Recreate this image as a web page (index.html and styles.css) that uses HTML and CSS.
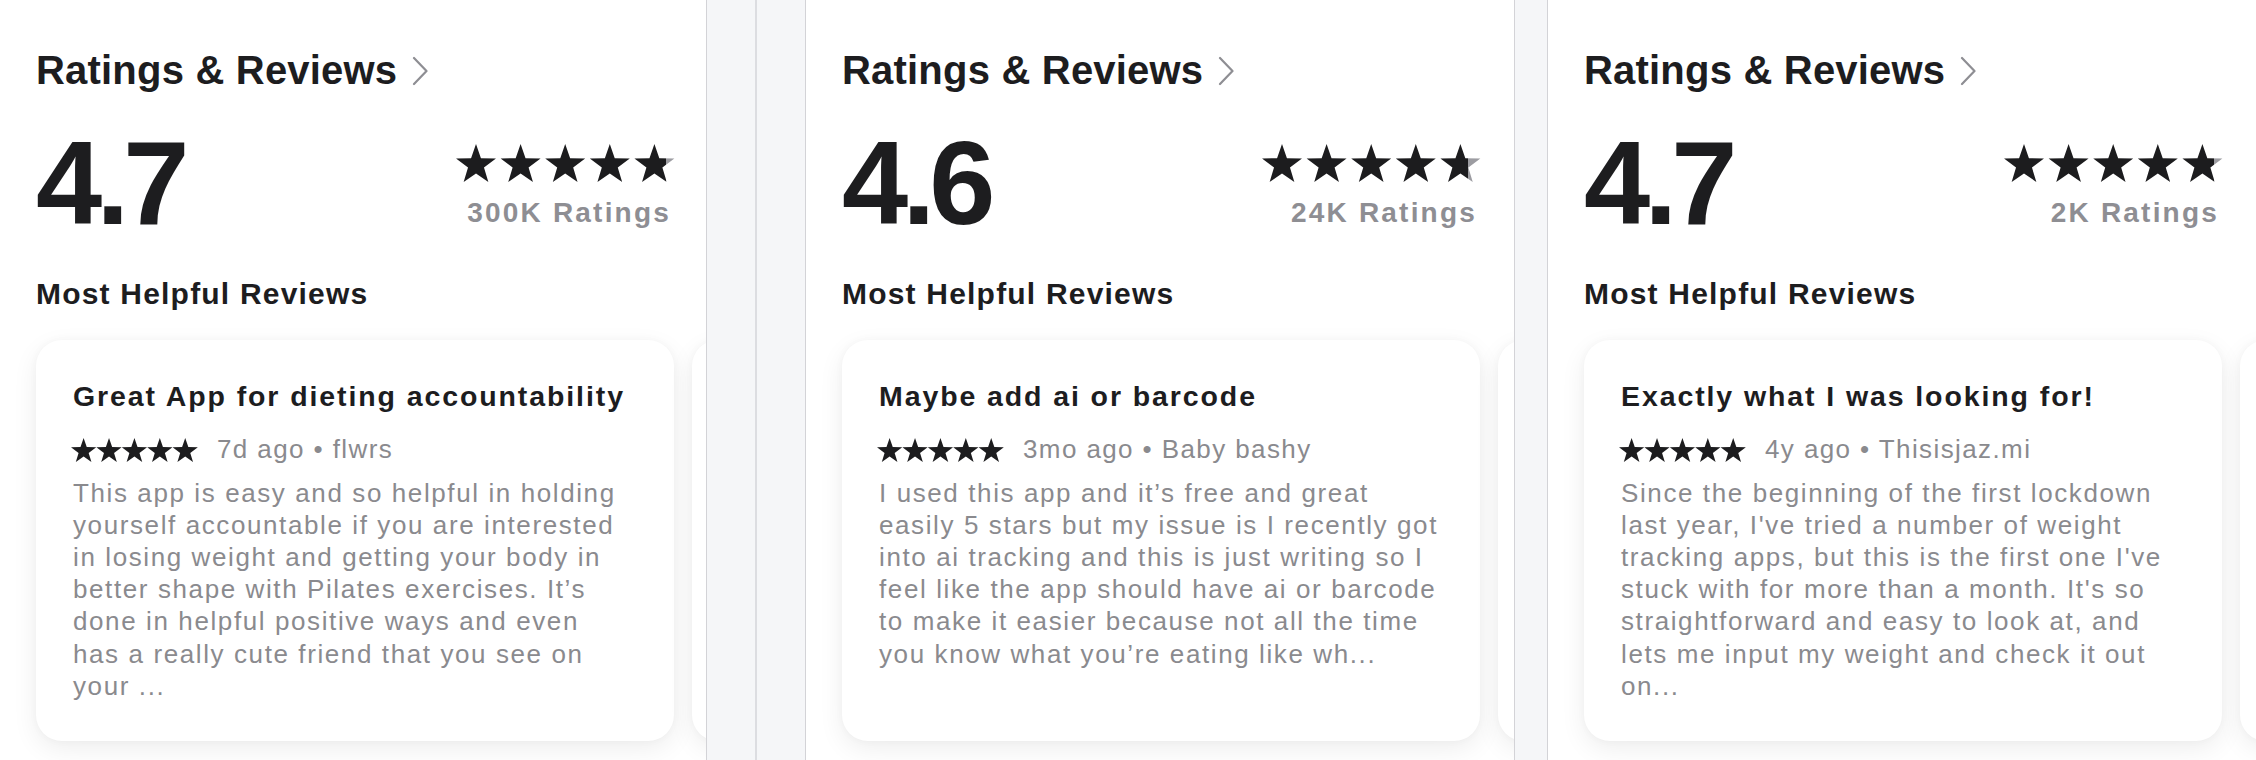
FILE: index.html
```html
<!DOCTYPE html>
<html lang="en">
<head>
<meta charset="utf-8">
<title>Ratings &amp; Reviews</title>
<link rel="stylesheet" href="styles.css">
</head>
<body>
<svg width="0" height="0" class="defs" aria-hidden="true">
  <defs>
    <path id="star" d="M0,-1 L0.235,-0.324 L0.951,-0.309 L0.380,0.124 L0.588,0.809 L0,0.4 L-0.588,0.809 L-0.380,0.124 L-0.951,-0.309 L-0.235,-0.324 Z"/>
    <linearGradient id="fill47" x1="0" x2="1" y1="0" y2="0">
      <stop offset="0.8" stop-color="#1c1c1e"/>
      <stop offset="0.8" stop-color="#9c9ca1"/>
    </linearGradient>
    <linearGradient id="fill46" x1="0" x2="1" y1="0" y2="0">
      <stop offset="0.69" stop-color="#1c1c1e"/>
      <stop offset="0.69" stop-color="#9c9ca1"/>
    </linearGradient>
  </defs>
</svg>
<div class="page">

  <section class="panel panel-first">
    <div class="rr-head">
      <h2 class="rr-title">Ratings &amp; Reviews</h2>
      <svg class="chev" viewBox="0 0 16 30"><path d="M2 2 L14.5 15 L2 28"/></svg>
    </div>
    <div class="rating-row">
      <div class="score">4.7</div>
      <div class="rating-side">
        <svg class="big-stars" viewBox="0 0 219 38">
          <use href="#star" transform="translate(20 21) scale(21)"/>
          <use href="#star" transform="translate(64.6 21) scale(21)"/>
          <use href="#star" transform="translate(109.2 21) scale(21)"/>
          <use href="#star" transform="translate(153.8 21) scale(21)"/>
          <use href="#star" class="part47" transform="translate(198.4 21) scale(21)"/>
        </svg>
        <div class="count">300K Ratings</div>
      </div>
    </div>
    <h3 class="mhr">Most Helpful Reviews</h3>
    <div class="cards">
      <article class="card">
        <h4 class="card-title">Great App for dieting accountability</h4>
        <div class="meta">
          <svg class="small-stars" viewBox="0 0 127 24">
            <use href="#star" transform="translate(12.62 13.27) scale(13.27)"/>
            <use href="#star" transform="translate(38.02 13.27) scale(13.27)"/>
            <use href="#star" transform="translate(63.42 13.27) scale(13.27)"/>
            <use href="#star" transform="translate(88.82 13.27) scale(13.27)"/>
            <use href="#star" transform="translate(114.22 13.27) scale(13.27)"/>
          </svg>
          <span class="meta-text">7d ago • flwrs</span>
        </div>
        <p class="body">
          <span>This app is easy and so helpful in holding</span>
          <span>yourself accountable if you are interested</span>
          <span>in losing weight and getting your body in</span>
          <span>better shape with Pilates exercises. It’s</span>
          <span>done in helpful positive ways and even</span>
          <span>has a really cute friend that you see on</span>
          <span>your ...</span>
        </p>
      </article>
      <article class="card"></article>
    </div>
  </section>

  <div class="gutter gutter-wide"><div class="seam"></div></div>

  <section class="panel">
    <div class="rr-head">
      <h2 class="rr-title">Ratings &amp; Reviews</h2>
      <svg class="chev" viewBox="0 0 16 30"><path d="M2 2 L14.5 15 L2 28"/></svg>
    </div>
    <div class="rating-row">
      <div class="score">4.6</div>
      <div class="rating-side">
        <svg class="big-stars" viewBox="0 0 219 38">
          <use href="#star" transform="translate(20 21) scale(21)"/>
          <use href="#star" transform="translate(64.6 21) scale(21)"/>
          <use href="#star" transform="translate(109.2 21) scale(21)"/>
          <use href="#star" transform="translate(153.8 21) scale(21)"/>
          <use href="#star" class="part46" transform="translate(198.4 21) scale(21)"/>
        </svg>
        <div class="count">24K Ratings</div>
      </div>
    </div>
    <h3 class="mhr">Most Helpful Reviews</h3>
    <div class="cards">
      <article class="card">
        <h4 class="card-title">Maybe add ai or barcode</h4>
        <div class="meta">
          <svg class="small-stars" viewBox="0 0 127 24">
            <use href="#star" transform="translate(12.62 13.27) scale(13.27)"/>
            <use href="#star" transform="translate(38.02 13.27) scale(13.27)"/>
            <use href="#star" transform="translate(63.42 13.27) scale(13.27)"/>
            <use href="#star" transform="translate(88.82 13.27) scale(13.27)"/>
            <use href="#star" transform="translate(114.22 13.27) scale(13.27)"/>
          </svg>
          <span class="meta-text">3mo ago • Baby bashy</span>
        </div>
        <p class="body">
          <span>I used this app and it’s free and great</span>
          <span>easily 5 stars but my issue is I recently got</span>
          <span>into ai tracking and this is just writing so I</span>
          <span>feel like the app should have ai or barcode</span>
          <span>to make it easier because not all the time</span>
          <span>you know what you’re eating like wh...</span>
        </p>
      </article>
      <article class="card"></article>
    </div>
  </section>

  <div class="gutter gutter-narrow"></div>

  <section class="panel">
    <div class="rr-head">
      <h2 class="rr-title">Ratings &amp; Reviews</h2>
      <svg class="chev" viewBox="0 0 16 30"><path d="M2 2 L14.5 15 L2 28"/></svg>
    </div>
    <div class="rating-row">
      <div class="score">4.7</div>
      <div class="rating-side">
        <svg class="big-stars" viewBox="0 0 219 38">
          <use href="#star" transform="translate(20 21) scale(21)"/>
          <use href="#star" transform="translate(64.6 21) scale(21)"/>
          <use href="#star" transform="translate(109.2 21) scale(21)"/>
          <use href="#star" transform="translate(153.8 21) scale(21)"/>
          <use href="#star" class="part47" transform="translate(198.4 21) scale(21)"/>
        </svg>
        <div class="count">2K Ratings</div>
      </div>
    </div>
    <h3 class="mhr">Most Helpful Reviews</h3>
    <div class="cards">
      <article class="card">
        <h4 class="card-title">Exactly what I was looking for!</h4>
        <div class="meta">
          <svg class="small-stars" viewBox="0 0 127 24">
            <use href="#star" transform="translate(12.62 13.27) scale(13.27)"/>
            <use href="#star" transform="translate(38.02 13.27) scale(13.27)"/>
            <use href="#star" transform="translate(63.42 13.27) scale(13.27)"/>
            <use href="#star" transform="translate(88.82 13.27) scale(13.27)"/>
            <use href="#star" transform="translate(114.22 13.27) scale(13.27)"/>
          </svg>
          <span class="meta-text">4y ago • Thisisjaz.mi</span>
        </div>
        <p class="body">
          <span>Since the beginning of the first lockdown</span>
          <span>last year, I've tried a number of weight</span>
          <span>tracking apps, but this is the first one I've</span>
          <span>stuck with for more than a month. It's so</span>
          <span>straightforward and easy to look at, and</span>
          <span>lets me input my weight and check it out</span>
          <span>on...</span>
        </p>
      </article>
      <article class="card"></article>
    </div>
  </section>

</div>
</body>
</html>
```
FILE: styles.css
```css
* {
  box-sizing: border-box;
  margin: 0;
  padding: 0;
}

html,
body {
  width: 2256px;
  height: 760px;
  overflow: hidden;
  background: #ffffff;
}

body {
  font-family: "Liberation Sans", Arial, Helvetica, sans-serif;
  color: #1d1d1f;
}

.defs {
  position: absolute;
  width: 0;
  height: 0;
}

.page {
  display: flex;
  height: 760px;
}

.panel {
  flex: none;
  width: 708px;
  height: 760px;
  overflow: hidden;
  padding: 46px 0 0 36px;
  background: #ffffff;
}

.panel-first {
  width: 706px;
}

.gutter {
  flex: none;
  height: 760px;
  background: #f5f6f8;
  border-left: 1px solid #d3d3d7;
  border-right: 1px solid #d3d3d7;
}

.gutter-wide {
  width: 100px;
  display: flex;
  justify-content: center;
}

.seam {
  width: 2px;
  height: 100%;
  background: #dcdde1;
}

.gutter-narrow {
  width: 34px;
}

/* header */
.rr-head {
  display: flex;
  align-items: center;
  height: 48px;
}

.rr-title {
  font-size: 40px;
  font-weight: 700;
  line-height: 48px;
  letter-spacing: 0.2px;
  color: #1d1d1f;
}

.chev {
  width: 16px;
  height: 30px;
  margin-left: 15px;
  margin-top: 2px;
  fill: none;
  stroke: #8e8e93;
  stroke-width: 2.2;
  stroke-linecap: round;
  stroke-linejoin: round;
}

/* rating summary */
.rating-row {
  display: flex;
  justify-content: space-between;
  align-items: flex-start;
  width: 639px;
  margin-top: 29px;
}

.score {
  font-size: 119px;
  font-weight: 700;
  line-height: 120px;
  letter-spacing: -6px;
  color: #1d1d1f;
}

.rating-side {
  display: flex;
  flex-direction: column;
  align-items: flex-end;
  padding-top: 21px;
}

.big-stars {
  display: block;
  width: 219px;
  height: 38px;
  fill: #1c1c1e;
}

.part47 {
  fill: url(#fill47);
}

.part46 {
  fill: url(#fill46);
}

.count {
  margin-top: 14px;
  margin-right: 4px;
  font-size: 28px;
  font-weight: 700;
  line-height: 34px;
  letter-spacing: 2.2px;
  color: #8e8e93;
}

.mhr {
  margin-top: 33px;
  font-size: 30px;
  font-weight: 700;
  line-height: 36px;
  letter-spacing: 1.2px;
  color: #1d1d1f;
}

/* review cards */
.cards {
  display: flex;
  gap: 18px;
  margin-top: 28px;
}

.card {
  flex: none;
  width: 638px;
  height: 401px;
  padding: 39px 37px 0 37px;
  background: #ffffff;
  border-radius: 26px;
  box-shadow: 0 8px 26px rgba(0, 0, 0, 0.07), 0 0 8px rgba(0, 0, 0, 0.03);
}

.card-title {
  font-size: 28.5px;
  font-weight: 700;
  line-height: 34px;
  letter-spacing: 1.9px;
  white-space: nowrap;
  color: #1d1d1f;
}

.meta {
  display: flex;
  align-items: center;
  height: 32px;
  margin-top: 19.5px;
}

.small-stars {
  flex: none;
  width: 127px;
  height: 24px;
  margin-left: -2px;
  margin-top: 3px;
  fill: #1c1c1e;
}

.meta-text {
  margin-left: 19px;
  font-size: 26px;
  line-height: 32px;
  letter-spacing: 1.4px;
  white-space: nowrap;
  color: #8a8a8e;
}

.body {
  margin-top: 12px;
  font-size: 26px;
  line-height: 32.2px;
  letter-spacing: 1.6px;
  color: #8a8a8e;
}

.body span {
  display: block;
  white-space: nowrap;
}
```
